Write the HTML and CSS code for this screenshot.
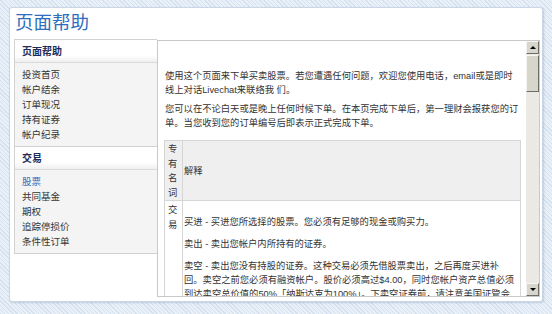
FILE: index.html
```html
<!DOCTYPE html>
<html lang="zh-CN">
<head>
<meta charset="utf-8">
<title>页面帮助</title>
<link rel="stylesheet" href="styles.css">
</head>
<body>
<div class="panel">
  <h1 class="title">页面帮助</h1>
  <div class="main">
    <nav class="sidebar">
      <div class="sb-group">
        <div class="sb-head">页面帮助</div>
        <ul class="sb-items">
          <li>投资首页</li>
          <li>帐户结余</li>
          <li>订单现况</li>
          <li>持有证券</li>
          <li>帐户纪录</li>
        </ul>
      </div>
      <div class="sb-group">
        <div class="sb-head">交易</div>
        <ul class="sb-items">
          <li class="active">股票</li>
          <li>共同基金</li>
          <li>期权</li>
          <li>追踪停损价</li>
          <li>条件性订单</li>
        </ul>
      </div>
    </nav>
    <div class="frame">
      <div class="content">
        <p>使用这个页面来下单买卖股票。若您遭遇任何问题，欢迎您使用电话，email或是即时<br>线上对话Livechat来联络我 们。</p>
        <p>您可以在不论白天或是晚上任何时候下单。在本页完成下单后，第一理财会报获您的订<br>单。当您收到您的订单编号后即表示正式完成下单。</p>
        <table class="terms">
          <tr class="head">
            <th class="c1">专有名词</th>
            <th class="c2">解释</th>
          </tr>
          <tr>
            <td class="c1">交易</td>
            <td class="c2">
              <p>买进 - 买进您所选择的股票。您必须有足够的现金或购买力。</p>
              <p>卖出 - 卖出您帐户内所持有的证券。</p>
              <p>卖空 - 卖出您没有持股的证券。这种交易必须先借股票卖出，之后再度买进补<br>回。卖空之前您必须有融资帐户。股价必须高过$4.00，同时您帐户资产总值必须<br>到达卖空总价值的50%「纳斯达克为100%」。下卖空证券前，请注意美国证管会</p>
            </td>
          </tr>
        </table>
      </div>
      <div class="sbar">
        <div class="sbtn up"><span class="tri"></span></div>
        <div class="track">
          <div class="thumb"></div>
        </div>
        <div class="sbtn down"><span class="tri"></span></div>
      </div>
    </div>
  </div>
</div>
</body>
</html>
```
FILE: styles.css
```css
html, body {
  margin: 0;
  padding: 0;
}
body {
  width: 552px;
  height: 314px;
  overflow: hidden;
  background-color: #e3ecf6;
  background-image: repeating-linear-gradient(45deg, #d3e1f1 0 1px, #e9f0f8 1px 3px);
  font-family: "Liberation Sans", "Noto Sans CJK SC", sans-serif;
  color: #333;
  padding: 7px 0 0 9px;
  box-sizing: border-box;
}
.panel {
  width: 534px;
  height: 295px;
  box-sizing: border-box;
  background: #fff;
  border: 1px solid #c9d6e5;
  border-radius: 3px;
  box-shadow: 1px 1px 2px rgba(90, 110, 140, 0.25);
}
.title {
  margin: 0;
  height: 31px;
  box-sizing: border-box;
  padding: 1px 0 0 5px;
  font-family: "Noto Sans CJK SC", sans-serif;
  font-weight: normal;
  font-size: 18.5px;
  line-height: 24px;
  color: #2f6dbd;
}
.main {
  display: flex;
  align-items: flex-start;
  margin-left: 4px;
}
.sidebar {
  width: 143px;
  box-sizing: border-box;
  border: 1px solid #d2d2d2;
  border-right: none;
  font-family: "Noto Sans CJK SC", sans-serif;
}
.sb-group + .sb-group {
  border-top: 1px solid #d2d2d2;
}
.sb-head {
  height: 23px;
  box-sizing: border-box;
  border-bottom: 1px solid #dadada;
  background: linear-gradient(#ffffff 0, #ffffff 70%, #efefef 100%);
  padding-left: 7px;
  font-weight: bold;
  font-size: 10px;
  line-height: 22px;
  color: #1b2c58;
}
.sb-items {
  list-style: none;
  margin: 0;
  padding: 4px 0 4px 7px;
  background: #f4f4f4;
  font-size: 9.5px;
  line-height: 15px;
  color: #333;
}
.sb-items .active {
  color: #2f6dbd;
}
.frame {
  display: flex;
  width: 383px;
  height: 257px;
  box-sizing: border-box;
  margin-top: 1px;
  border: 1px solid #c9c9c9;
  background: #fff;
}
.content {
  flex: 1;
  overflow: hidden;
  padding: 28px 0 0 7px;
  font-size: 9.3px;
  line-height: 14px;
  color: #333;
}
.content p {
  margin: 0 0 5px;
  white-space: nowrap;
}
.terms {
  margin: 10px 0 0 -1px;
  width: 357px;
  border-collapse: collapse;
  border: 1px solid #d6d6d6;
  font-size: 9.3px;
}
.terms th, .terms td {
  border: 1px solid #d6d6d6;
  font-weight: normal;
  text-align: left;
  color: #333;
}
.terms .head {
  background: #efefef;
}
.terms .c1 {
  width: 12px;
  padding: 1px 2px 0 3px;
  line-height: 14.5px;
  vertical-align: top;
  word-break: break-all;
}
.terms th.c2 {
  padding: 0 2px 0 1px;
  vertical-align: middle;
}
.terms td.c1 {
  padding-top: 2px;
  line-height: 14.5px;
}
.terms td.c2 {
  padding: 2px 2px 0 1px;
  vertical-align: top;
}
.terms td.c2 p {
  margin: 8px 0;
  line-height: 14px;
}
.terms td.c2 p:first-child {
  margin-top: 12px;
}
.sbar {
  width: 13px;
  display: flex;
  flex-direction: column;
  background-color: #ebe9e3;
}
.sbtn {
  height: 13px;
  box-sizing: border-box;
  background: #d8d5cd;
  border: 1px solid;
  border-color: #f6f5f1 #6f6d68 #6f6d68 #f6f5f1;
  display: flex;
  align-items: center;
  justify-content: center;
}
.tri {
  width: 0;
  height: 0;
  border-left: 3px solid transparent;
  border-right: 3px solid transparent;
}
.up .tri {
  border-bottom: 3px solid #000;
}
.down .tri {
  border-top: 3px solid #000;
}
.track {
  flex: 1;
  padding-top: 1px;
}
.thumb {
  height: 37px;
  box-sizing: border-box;
  background: #d8d5cd;
  border: 1px solid;
  border-color: #f6f5f1 #6f6d68 #6f6d68 #f6f5f1;
}
```
